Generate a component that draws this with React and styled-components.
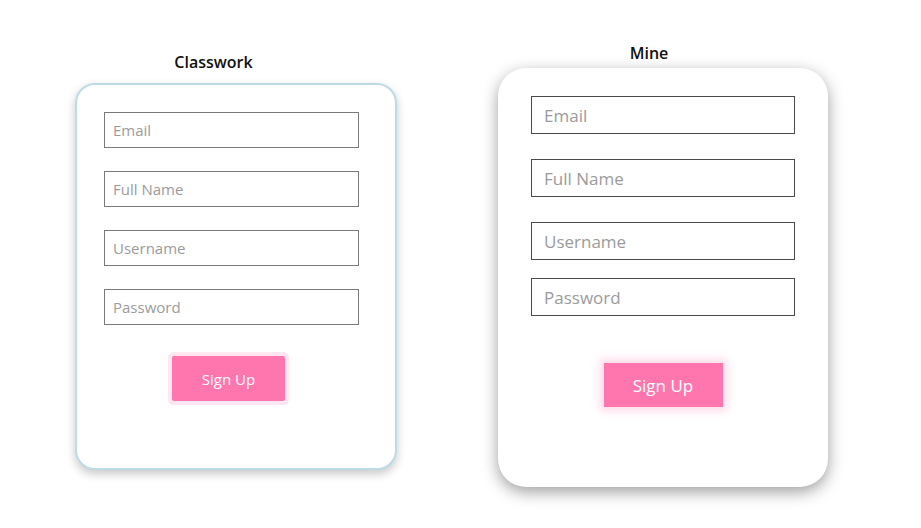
import React from "react";
import styled, { createGlobalStyle, css } from "styled-components";

const GlobalStyle = createGlobalStyle`
  body {
    margin: 0;
    background: #ffffff;
    font-family: "Open Sans", "Liberation Sans", sans-serif;
  }
`;

const Page = styled.div`
  display: flex;
  align-items: flex-start;
  gap: 101px;
  padding-left: 75px;
  height: 528px;
  box-sizing: border-box;
`;

const Column = styled.section`
  display: flex;
  flex-direction: column;
  margin-top: ${(p) => p.$top}px;
`;

const Title = styled.h2`
  margin: 0 0 ${(p) => p.$gap}px;
  padding-right: ${(p) => p.$shift}px;
  text-align: center;
  font-size: 16px;
  line-height: 20px;
  font-weight: 600;
  color: #111;
`;

const ClassCard = styled.form`
  width: 322px;
  height: 387px;
  box-sizing: border-box;
  padding: 27px 36px 0 27px;
  border: 2px solid #bddbe5;
  border-radius: 20px;
  box-shadow: 0 4px 10px rgba(0, 0, 0, 0.22);
  background: #fff;
  display: flex;
  flex-direction: column;
  gap: 23px;
`;

const MineCard = styled.form`
  width: 330px;
  height: 419px;
  box-sizing: border-box;
  padding: 28px 33px 0;
  border-radius: 28px;
  box-shadow: 0 5px 16px rgba(0, 0, 0, 0.38);
  background: #fff;
  display: flex;
  flex-direction: column;
`;

const Field = styled.input`
  display: block;
  box-sizing: border-box;
  width: 100%;
  margin: 0;
  background: #fff;
  font-family: "Open Sans", "Liberation Sans", sans-serif;
  font-weight: 500;
  outline: none;
  border-radius: 0;

  &::placeholder {
    color: #9b9b9b;
  }

  ${(p) =>
    p.$variant === "mine"
      ? css`
          height: 38px;
          padding: 0 12px;
          font-size: 17px;
          border: 1px solid #4a4a4a;
          margin-top: ${p.$space}px;
        `
      : css`
          height: 36px;
          padding: 0 8px;
          font-size: 15px;
          border: 1px solid #7a7a7a;
        `}
`;

const SignUp = styled.button`
  align-self: center;
  border: none;
  background: #ff76ae;
  color: #fff;
  font-family: "Open Sans", "Liberation Sans", sans-serif;
  font-weight: 500;
  cursor: pointer;

  ${(p) =>
    p.$variant === "mine"
      ? css`
          width: 119px;
          height: 44px;
          margin-top: 47px;
          font-size: 17px;
          box-shadow: 0 0 8px 4px rgba(255, 150, 195, 0.35);
        `
      : css`
          width: 113px;
          height: 45px;
          margin-top: 8px;
          margin-right: 6px;
          font-size: 15px;
          border-radius: 2px;
          box-shadow: 0 0 0 4px #ffe6f0;
        `}
`;

const classFields = ["Email", "Full Name", "Username", "Password"];
const mineFields = [
  { label: "Email", space: 0 },
  { label: "Full Name", space: 25 },
  { label: "Username", space: 25 },
  { label: "Password", space: 18 },
];

export default function App() {
  return (
    <>
      <GlobalStyle />
      <Page>
        <Column $top={52}>
          <Title $gap={11} $shift={45}>
            Classwork
          </Title>
          <ClassCard onSubmit={(e) => e.preventDefault()}>
            {classFields.map((f) => (
              <Field key={f} placeholder={f} />
            ))}
            <SignUp type="submit">Sign Up</SignUp>
          </ClassCard>
        </Column>
        <Column $top={43}>
          <Title $gap={5} $shift={28}>
            Mine
          </Title>
          <MineCard onSubmit={(e) => e.preventDefault()}>
            {mineFields.map((f) => (
              <Field
                key={f.label}
                $variant="mine"
                $space={f.space}
                placeholder={f.label}
              />
            ))}
            <SignUp type="submit" $variant="mine">
              Sign Up
            </SignUp>
          </MineCard>
        </Column>
      </Page>
    </>
  );
}
